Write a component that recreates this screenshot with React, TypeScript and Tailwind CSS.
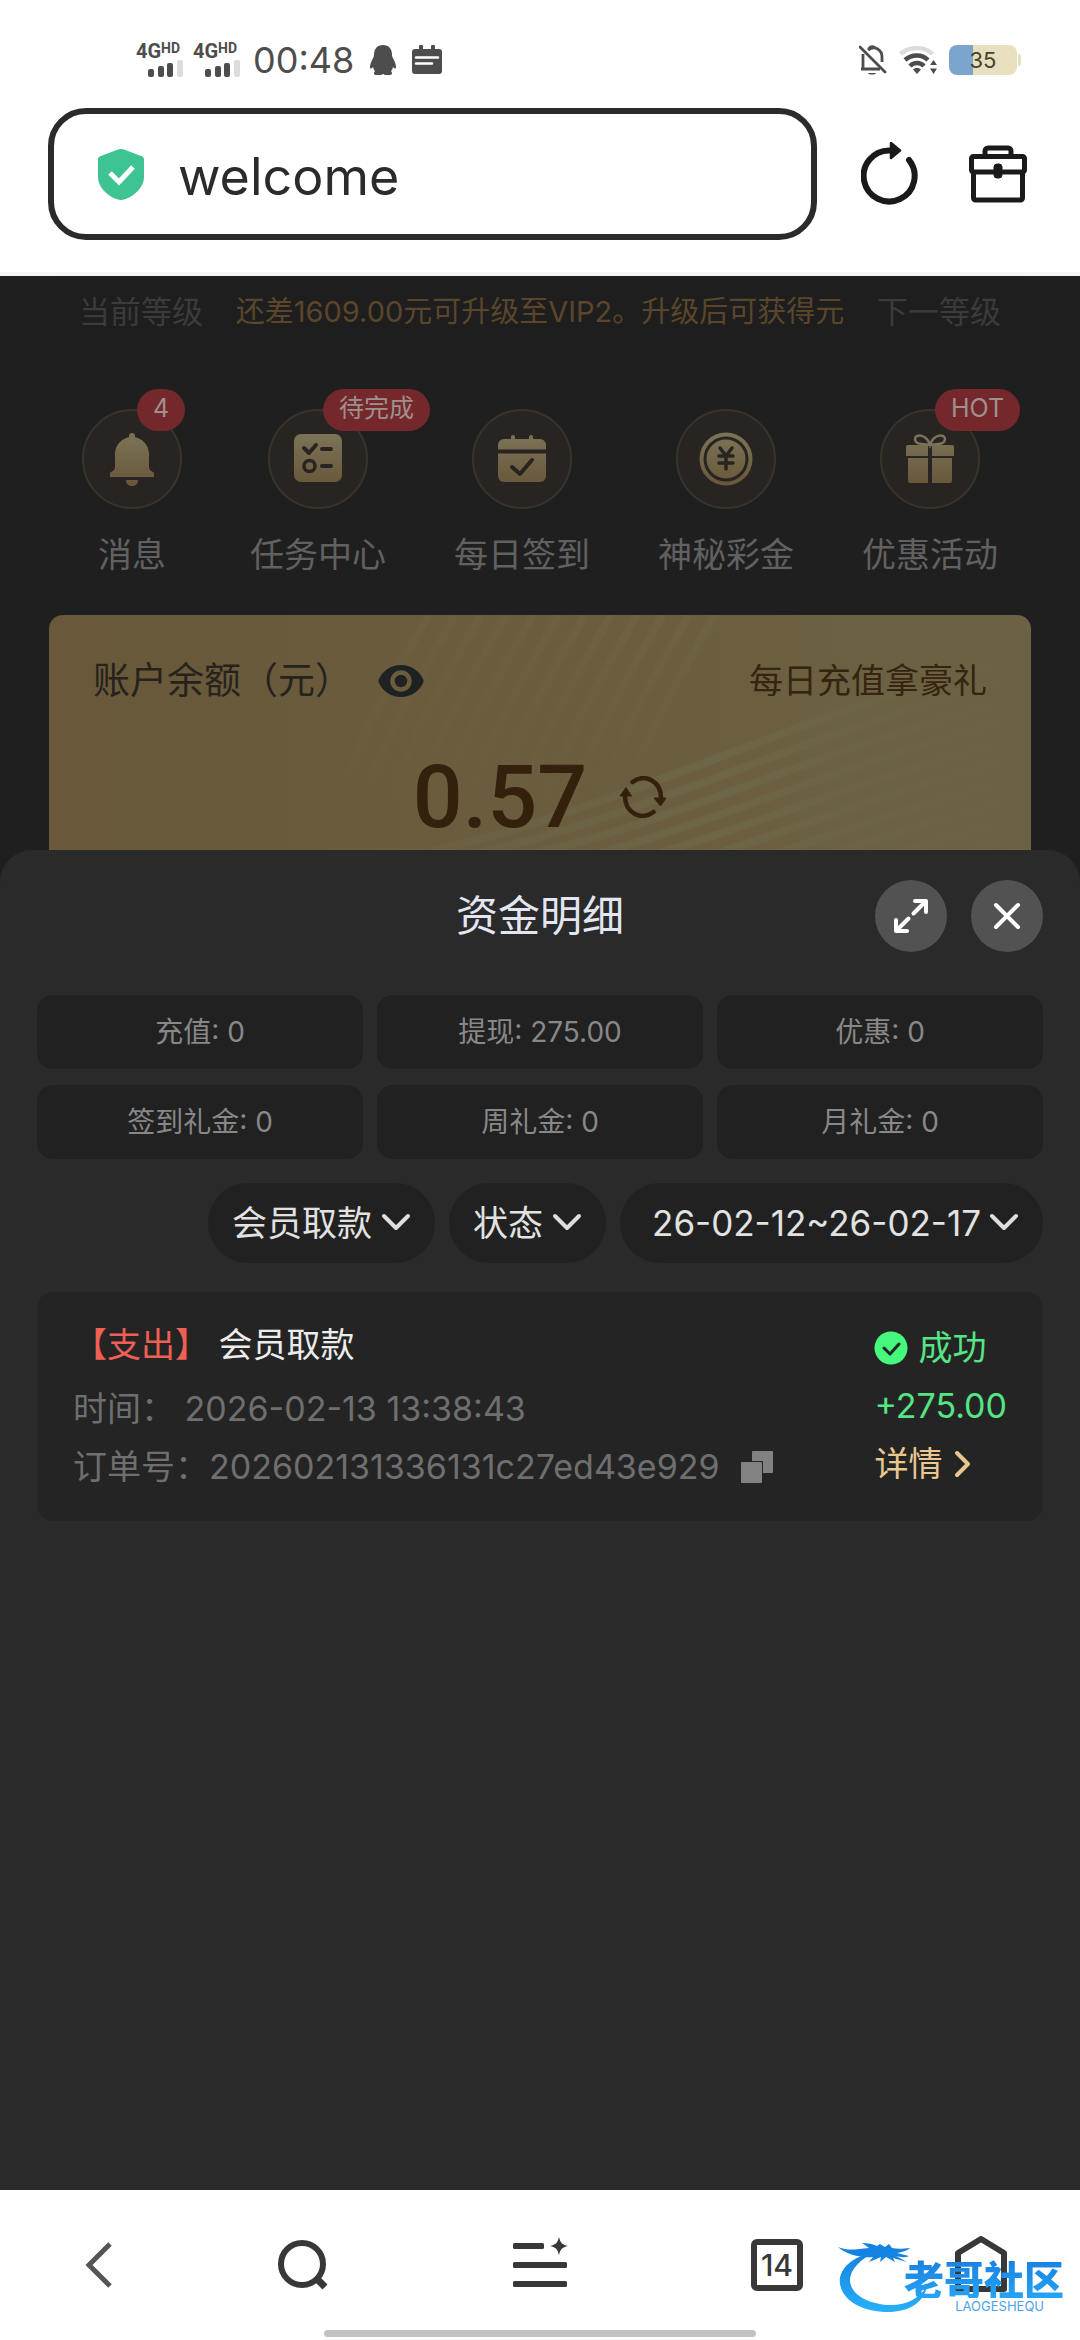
import { useState } from "react";
import type { ReactNode } from "react";

type Shortcut = {
  label: string;
  badge?: string;
  icon: ReactNode;
};

const GOLD = "url(#gold)";
const HOLE = "#272422";

const SHORTCUTS: Shortcut[] = [
  {
    label: "消息",
    badge: "4",
    icon: (
      <svg viewBox="0 0 56 56" className="size-14">
        <circle cx="28" cy="5" r="3" fill={GOLD} />
        <path
          d="M28 6c-10 0-17 8-17 17v13c0 3-2 4-4 5a2 2 0 0 0-1 2v3h44v-3a2 2 0 0 0-1-2c-2-1-4-2-4-5V23C45 14 38 6 28 6Z"
          fill={GOLD}
        />
        <path d="M22 49h12c0 4-3 6-6 6s-6-2-6-6Z" fill={GOLD} />
      </svg>
    ),
  },
  {
    label: "任务中心",
    badge: "待完成",
    icon: (
      <svg viewBox="0 0 56 56" className="size-14">
        <rect x="4" y="3" width="48" height="48" rx="7" fill={GOLD} />
        <g fill="none" stroke={HOLE} strokeWidth="4" strokeLinecap="round" strokeLinejoin="round">
          <path d="m14 17 5 5 7-8M32 18h9M32 35h9" />
          <circle cx="19.500" cy="35" r="5.500" strokeWidth="3.500" />
        </g>
      </svg>
    ),
  },
  {
    label: "每日签到",
    icon: (
      <svg viewBox="0 0 56 56" className="size-14">
        <path d="M17 6a2 2 0 0 1 4 0v5h-4zM35 6a2 2 0 0 1 4 0v5h-4z" fill={GOLD} />
        <rect x="4" y="8" width="48" height="43" rx="6" fill={GOLD} />
        <path d="M4 20.500h48" stroke={HOLE} strokeWidth="4" />
        <path
          d="m18 36 8 7 12-14"
          fill="none"
          stroke={HOLE}
          strokeWidth="4"
          strokeLinecap="round"
          strokeLinejoin="round"
        />
      </svg>
    ),
  },
  {
    label: "神秘彩金",
    icon: (
      <svg viewBox="0 0 56 56" className="size-14">
        <circle cx="28" cy="28" r="26.500" fill={GOLD} />
        <circle cx="28" cy="28" r="21" fill="none" stroke={HOLE} strokeWidth="3" />
        <path
          d="m22 17 6 8 6-8M28 25v13M21 25h14M21 32h14"
          fill="none"
          stroke={HOLE}
          strokeWidth="3.500"
          strokeLinecap="round"
          strokeLinejoin="round"
        />
      </svg>
    ),
  },
  {
    label: "优惠活动",
    badge: "HOT",
    icon: (
      <svg viewBox="0 0 56 56" className="size-14">
        <path
          d="M28 14C22 13 13 14 13 8c0-5 11-6 15 6 4-12 15-11 15-6 0 6-9 5-15 6Z"
          fill="none"
          stroke="#7c7458"
          strokeWidth="2.500"
        />
        <path d="M6 14h20v11H4V16a2 2 0 0 1 2-2ZM30 14h20a2 2 0 0 1 2 2v9H30z" fill={GOLD} />
        <path d="M6 27h20v25H8a2 2 0 0 1-2-2zM30 27h20v23a2 2 0 0 1-2 2H30z" fill={GOLD} />
      </svg>
    ),
  },
];

const STATS = [
  { label: "充值", value: "0" },
  { label: "提现", value: "275.00" },
  { label: "优惠", value: "0" },
  { label: "签到礼金", value: "0" },
  { label: "周礼金", value: "0" },
  { label: "月礼金", value: "0" },
];

function Signal() {
  return (
    <div className="flex h-9 w-12 flex-col">
      <div className="flex items-start font-[Roboto] font-bold leading-none">
        <span className="text-[20px] leading-[18px]">4G</span>
        <span className="text-[14px] leading-3">HD</span>
      </div>
      <svg viewBox="0 0 48 18" className="h-[18px] w-12">
        <g fill="#4d4d4d">
          <rect x="12" y="9" width="6" height="8" rx="2" />
          <rect x="22" y="6" width="6" height="11" rx="2" />
          <rect x="31" y="3" width="6" height="14" rx="2" />
        </g>
        <rect x="41" y="0" width="6" height="17" rx="2" fill="#dcdcdc" />
      </svg>
    </div>
  );
}

function StatusBar() {
  return (
    <div className="flex h-[108px] items-center justify-between pt-3 pr-[59px] pl-[136px] text-[#4d4d4d]">
      <div className="flex items-center">
        <div className="flex gap-[9px]">
          <Signal />
          <Signal />
        </div>
        <span className="ml-3 text-[36px] leading-9">00:48</span>
        <svg viewBox="0 0 26 30" className="ml-4 h-[30px] w-[26px]" fill="#4d4d4d">
          <path d="M13 0c6 0 9 4 9 10 0 3 4 7 4 12 0 2-1 2-3 0-.5 2-1 3-2 4 1 1 2 4-1 4h-5l-2-1-2 1H6c-3 0-2-3-1-4-1-1-1.500-2-2-4-2 2-3 2-3 0 0-5 4-9 4-12 0-6 3-10 9-10Z" />
        </svg>
        <svg viewBox="0 0 30 30" className="ml-4 size-[30px]">
          <path
            d="M3 4h4V1.500a1.500 1.500 0 0 1 4 0V4h8V1.500a1.500 1.500 0 0 1 4 0V4h4a3 3 0 0 1 3 3v19a3 3 0 0 1-3 3H3a3 3 0 0 1-3-3V7a3 3 0 0 1 3-3Z"
            fill="#4d4d4d"
          />
          <path d="M4 12.500h22M4 18.500h16" stroke="#fff" strokeWidth="2.500" strokeLinecap="round" />
        </svg>
      </div>
      <div className="flex items-center">
        <svg viewBox="0 0 28 30" className="h-[30px] w-7" fill="none" stroke="#4d4d4d" strokeWidth="2.800">
          <path d="M4 9v15h17M9 5c7-5 14 0 14 7v5M2 24h3" />
          <path d="M10 4c0-3 6-3 6 0" fill="#4d4d4d" />
          <path d="m1 2 25 25" strokeLinecap="round" />
          <path d="M9 28h8c-1 2-7 2-8 0Z" fill="#4d4d4d" stroke="none" />
        </svg>
        <svg viewBox="0 0 40 30" className="ml-3 h-[30px] w-10" fill="none">
          <path d="M1.500 9c9-8 24-8 32 0" stroke="#dcdcdc" strokeWidth="4.500" />
          <path d="M6 15c7-6 17-6 23 0M11 21c4-4 10-4 14 0" stroke="#4d4d4d" strokeWidth="4.500" />
          <path d="M14 24.500c2-2 6-2 8 0L18 29zM31 20l3.500-5 3.500 5zM31 23.500h7L34.500 29z" fill="#4d4d4d" />
        </svg>
        <div className="ml-[10px] flex h-[30px] w-[68px] items-center justify-center rounded-[8px] bg-linear-to-r from-[#7ba5cd] from-36% to-[#e8dfbe] to-36% text-[22px] leading-none text-[#45422f]">
          35
        </div>
        <div className="ml-px h-3 w-[3px] rounded-r-sm bg-[#e8dfbe]" />
      </div>
    </div>
  );
}

function AddressBar() {
  return (
    <div className="flex items-center border-b-4 border-[#f5f5f5] pr-[53px] pb-8 pl-12">
      <label className="flex h-[132px] min-w-0 flex-1 items-center gap-[34px] rounded-[38px] border-6 border-[#2b2b2b] pr-8 pl-11">
        <svg viewBox="0 0 46 52" className="h-[52px] w-[46px] shrink-0">
          <path
            d="M20 1.500a8 8 0 0 1 6 0L43 8a4 4 0 0 1 3 4v17c0 11-11 20-20 22.500a9 9 0 0 1-6 0C11 49 0 40 0 29V12a4 4 0 0 1 3-4Z"
            fill="#3dc492"
          />
          <path d="m12 25 9 9 14-15" fill="none" stroke="#fff" strokeWidth="5" />
        </svg>
        <input
          type="text"
          aria-label="网址"
          defaultValue="welcome"
          className="h-20 min-w-0 flex-1 bg-transparent pt-1 text-[52px] text-[#2b2b2b] outline-none"
        />
      </label>
      <button type="button" aria-label="刷新" className="ml-[44px]">
        <svg viewBox="0 0 58 64" className="h-16 w-[58px]" fill="none" stroke="#1a1a1a">
          <path d="M48 18A25.500 25.500 0 1 1 29 8.500" strokeWidth="6" strokeLinecap="round" />
          <path d="M30 1v15l9-7.500z" fill="#1a1a1a" strokeWidth="2.500" strokeLinejoin="round" />
        </svg>
      </button>
      <button type="button" aria-label="工具箱" className="ml-[50px]">
        <svg viewBox="0 0 58 58" className="size-[58px]" fill="none" stroke="#1a1a1a" strokeWidth="5">
          <rect x="2.500" y="11.500" width="53" height="15.500" rx="2" />
          <path d="M16 11V6a3 3 0 0 1 3-3h20a3 3 0 0 1 3 3v5M4.500 27v26a2 2 0 0 0 2 2h45a2 2 0 0 0 2-2V27" />
          <rect x="25" y="19" width="8" height="14" rx="3" fill="#1a1a1a" strokeWidth="1" />
        </svg>
      </button>
    </div>
  );
}

function BalanceCard() {
  const steep = Array.from({ length: 12 }, (_, i) => i * 26);
  const shallow = Array.from({ length: 11 }, (_, i) => i * 20);

  return (
    <section className="relative mx-[49px] overflow-hidden rounded-t-[14px] bg-linear-to-r from-[#69583a] to-[#6c6243] px-11 pt-11 pb-[5px]">
      <svg viewBox="0 0 982 235" preserveAspectRatio="none" className="absolute inset-0 size-full" fill="none">
        <defs>
          <linearGradient id="steep" gradientUnits="userSpaceOnUse" x1="0" y1="0" x2="0" y2="200">
            <stop offset="0" stopColor="#7a7652" stopOpacity="0.140" />
            <stop offset="1" stopColor="#7a7652" stopOpacity="0" />
          </linearGradient>
          <linearGradient id="shallow" gradientUnits="userSpaceOnUse" x1="380" y1="0" x2="960" y2="0">
            <stop offset="0" stopColor="#6f7556" stopOpacity="0.150" />
            <stop offset="0.500" stopColor="#6f7556" stopOpacity="0.280" />
            <stop offset="1" stopColor="#6f7556" stopOpacity="0" />
          </linearGradient>
        </defs>
        <g stroke="url(#steep)" strokeWidth="8">
          {steep.map((x) => (
            <path key={x} d={`M${380 + x} 0C${340 + x} 70 ${310 + x} 120 ${280 + x} 210`} />
          ))}
        </g>
        <g stroke="url(#shallow)" strokeWidth="8">
          {shallow.map((y) => (
            <path key={y} d={`M${370 + y} ${240 + y / 3}C600 ${185 + y} 740 ${100 + y} 982 ${40 + y}`} />
          ))}
        </g>
      </svg>
      <div className="relative flex h-11 items-center justify-between">
        <div className="flex items-center text-[37px] text-[#26231c]">
          账户余额（元）
          <button type="button" aria-label="隐藏余额" className="ml-[26px]">
            <svg viewBox="0 0 46 34" className="h-[34px] w-[46px]">
              <path d="M23 1C12 1 4 8 1 15a4 4 0 0 0 0 4c3 7 11 14 22 14s19-7 22-14a4 4 0 0 0 0-4C42 8 34 1 23 1Z" fill="#1f2223" />
              <circle cx="23" cy="17" r="8.500" fill="none" stroke="#6b5c3d" strokeWidth="4.500" />
            </svg>
          </button>
        </div>
        <a href="#recharge" className="text-[34px] leading-10 text-[#35240f]">
          每日充值拿豪礼
        </a>
      </div>
      <div className="relative mt-[46px] flex h-24 items-center justify-center gap-8 text-[#33210e]">
        <span className="font-[Roboto] text-[88px] leading-24 font-medium">0.57</span>
        <button type="button" aria-label="刷新余额">
          <svg viewBox="0 0 48 42" className="h-[42px] w-12" fill="none" stroke="#33210e" strokeWidth="4.500">
            <path d="M13.500 6C26-3 42 5 42 22M34.500 36C22 45 6 37 6 20" strokeLinecap="round" />
            <path d="m35 22 6.500 8L47 22zM1 20l6-8.500 5.500 8.500z" fill="#33210e" strokeWidth="1" />
          </svg>
        </button>
      </div>
    </section>
  );
}

function AccountPage() {
  return (
    <>
      <div className="mx-[49px] rounded-b-lg bg-[#1e1e1e] px-[30px] pb-7">
        <div className="flex h-[72px] items-center justify-between whitespace-nowrap">
          <span className="text-[31px] text-[#3b3b3b]">当前等级</span>
          <span className="text-[29px] text-[#5b462b]">还差1609.00元可升级至VIP2。升级后可获得元</span>
          <span className="text-[31px] text-[#3b3b3b]">下一等级</span>
        </div>
      </div>
      <nav className="mt-[33px] mb-10 flex justify-between px-[82px]">
        {SHORTCUTS.map((item) => (
          <button key={item.label} type="button" className="flex flex-col items-center gap-[26px]">
            <span className="relative flex size-[100px] items-center justify-center rounded-full border-2 border-[#38342a] bg-[#272422]">
              {item.icon}
              {item.badge && (
                <span className="absolute -top-[22px] left-[53px] flex h-[42px] items-center rounded-full bg-[#74282b] px-4 pb-0.5 text-[25px] whitespace-nowrap text-[#a0908d]">
                  {item.badge}
                </span>
              )}
            </span>
            <span className="text-[34px] leading-10 text-[#616161]">{item.label}</span>
          </button>
        ))}
      </nav>
      <BalanceCard />
    </>
  );
}

function Chevron() {
  return (
    <svg viewBox="0 0 30 20" className="h-5 w-[30px]" fill="none" stroke="#dedede" strokeWidth="4">
      <path d="m3 3 12 12L27 3" strokeLinecap="round" strokeLinejoin="round" />
    </svg>
  );
}

function FundDetails() {
  const [type, setType] = useState("会员取款");
  const [status, setStatus] = useState("状态");

  return (
    <main className="flex-1 rounded-t-[32px] bg-[#2a2a2a] px-[37px] pt-[30px]">
      <header className="grid grid-cols-[1fr_auto_1fr] items-center">
        <h1 className="col-start-2 text-[42px] leading-[60px] text-[#e2e6f2]">资金明细</h1>
        <div className="flex justify-end gap-6">
          <button
            type="button"
            aria-label="展开"
            className="flex size-[72px] items-center justify-center rounded-full bg-[#525252]"
          >
            <svg viewBox="0 0 36 36" className="size-9" fill="none" stroke="#fff" strokeWidth="4" strokeLinejoin="round">
              <path d="M22 3h11v11M32 4 20.500 15.500M14 33H3V22M4 32l11.500-11.500" strokeLinecap="round" />
            </svg>
          </button>
          <button
            type="button"
            aria-label="关闭"
            className="flex size-[72px] items-center justify-center rounded-full bg-[#525252]"
          >
            <svg viewBox="0 0 28 28" className="size-7" fill="none" stroke="#fff" strokeWidth="4">
              <path d="m3 3 22 22M25 3 3 25" strokeLinecap="round" />
            </svg>
          </button>
        </div>
      </header>

      <div className="mt-[43px] grid grid-cols-3 gap-x-[14px] gap-y-4">
        {STATS.map((s) => (
          <div
            key={s.label}
            className="flex h-[74px] items-center justify-center rounded-2xl bg-[#212121] text-[28px] text-[#888888]"
          >
            {s.label}: {s.value}
          </div>
        ))}
      </div>

      <div className="mt-6 flex justify-end gap-[14px] text-[35px] text-[#e2e2e2]">
        <label className="flex h-20 items-center gap-2 rounded-full bg-[#212121] px-6">
          <select
            aria-label="类型"
            value={type}
            onChange={(e) => setType(e.target.value)}
            className="appearance-none bg-transparent outline-none"
          >
            <option>会员取款</option>
          </select>
          <Chevron />
        </label>
        <label className="flex h-20 items-center gap-2 rounded-full bg-[#212121] px-6">
          <select
            aria-label="状态"
            value={status}
            onChange={(e) => setStatus(e.target.value)}
            className="appearance-none bg-transparent outline-none"
          >
            <option>状态</option>
          </select>
          <Chevron />
        </label>
        <button type="button" className="flex h-20 items-center gap-2 rounded-full bg-[#212121] pr-6 pl-8">
          26-02-12~26-02-17
          <Chevron />
        </button>
      </div>

      <article className="mt-[29px] flex items-center justify-between rounded-2xl bg-[#242424] px-9 pt-6 pb-[25px] text-[34px] leading-[58px]">
        <div className="text-[#6f6f6f]">
          <h2 className="mb-[6px] text-[#ececec]">
            <span className="text-[#ee5f55]">【支出】</span> 会员取款
          </h2>
          <p>时间： 2026-02-13 13:38:43</p>
          <p className="flex items-center">
            订单号：202602131336131c27ed43e929
            <button type="button" aria-label="复制" className="ml-5">
              <svg viewBox="0 0 34 34" className="size-[34px]" fill="#828282">
                <rect x="12" y="1" width="21" height="22" rx="1" />
                <rect x="0" y="11" width="23" height="23" rx="1" fill="#242424" />
                <rect x="1" y="12" width="21" height="21" rx="1" />
              </svg>
            </button>
          </p>
        </div>
        <div className="text-[#55e585]">
          <p className="flex items-center gap-[10px]">
            <svg viewBox="0 0 34 34" className="size-[34px]">
              <circle cx="17" cy="17" r="16.500" fill="#46f87c" />
              <path
                d="m10 17 6 6 9-10"
                fill="none"
                stroke="#242424"
                strokeWidth="3"
                strokeLinecap="round"
                strokeLinejoin="round"
              />
            </svg>
            成功
          </p>
          <p>+275.00</p>
          <a href="#detail" className="flex items-center gap-3 text-[#e9c88f]">
            详情
            <svg viewBox="0 0 18 28" className="h-7 w-[18px]" fill="none" stroke="#e9c88f" strokeWidth="4">
              <path d="m3 3 11 11L3 25" strokeLinecap="round" strokeLinejoin="round" />
            </svg>
          </a>
        </div>
      </article>
    </main>
  );
}

function Watermark() {
  return (
    <div className="pointer-events-none absolute right-4 bottom-[22px] h-[80px] w-[228px]">
      <svg viewBox="0 0 228 80" className="absolute inset-0 size-full">
        <defs>
          <linearGradient id="wave" x1="0" y1="0" x2="0" y2="1">
            <stop offset="0" stopColor="#1480e0" />
            <stop offset="1" stopColor="#28b0fa" />
          </linearGradient>
        </defs>
        <path
          d="M40 14C14 18 2 33 4 46c3 18 24 28 48 28 20 0 36-9 39-26-7 12-20 19-36 19C33 67 13 56 14 41c1-10 10-20 26-27Z"
          fill="url(#wave)"
        />
        <path
          d="M2 9c8 3 14 3 21 2l10-1-7-5c6 0 11 1 15 3l3-2 5 3 4-3 3 4c5 1 10 1 18 0-3 3-8 4-13 5l12 3c-4 2-9 1-13 0l11 6-14-4 2 4-9-5-6 5 1-5-12 5 4-5c-12 1-26-2-35-10Z"
          fill="#1583e2"
        />
      </svg>
      <div className="relative flex flex-col items-end pt-5">
        <span className="bg-linear-to-b from-[#1a7fe0] to-[#25a4f5] bg-clip-text font-['Noto_Sans_CJK_SC',sans-serif] text-[40px] leading-10 font-black text-transparent">
          老哥社区
        </span>
        <span className="mr-5 text-[13px] leading-4 text-[#4aa4ea]">LAOGESHEQU</span>
      </div>
    </div>
  );
}

function BottomBar() {
  return (
    <footer className="relative bg-white">
      <nav className="grid h-[140px] grid-cols-[198fr_210fr_264fr_210fr_198fr] items-center justify-items-center pt-[10px]">
        <button type="button" aria-label="后退">
          <svg viewBox="0 0 28 48" className="h-12 w-7" fill="none" stroke="#555" strokeWidth="5">
            <path d="M25 3 4 24l21 21" />
          </svg>
        </button>
        <button type="button" aria-label="搜索">
          <svg viewBox="0 0 52 52" className="size-13" fill="none" stroke="#383838" strokeWidth="6">
            <circle cx="25" cy="25" r="21" />
            <path d="m39 39 9 9" strokeWidth="7" />
          </svg>
        </button>
        <button type="button" aria-label="菜单">
          <svg viewBox="0 0 56 56" className="size-14">
            <g fill="#383838">
              <rect x="1" y="6" width="31" height="6" rx="1.500" />
              <rect x="1" y="25" width="54" height="6" rx="1.500" />
              <rect x="1" y="44" width="54" height="6" rx="1.500" />
              <path d="M47 0c1.500 6 3 7.500 9 9-6 1.500-7.500 3-9 9-1.500-6-3-7.500-9-9 6-1.500 7.500-3 9-9Z" />
            </g>
          </svg>
        </button>
        <button
          type="button"
          aria-label="14 个标签页"
          className="flex size-13 items-center justify-center rounded-[6px] border-6 border-[#383838] text-[30px] leading-none font-medium text-[#383838]"
        >
          14
        </button>
        <button type="button" aria-label="主页">
          <svg viewBox="0 0 54 58" className="h-[58px] w-[54px]" fill="none" stroke="#383838" strokeWidth="6">
            <path d="M4 53V17L27 3l23 14v36z" strokeLinejoin="round" />
          </svg>
        </button>
      </nav>
      <div className="flex h-[10px] justify-center">
        <div className="h-[7px] w-2/5 rounded-full bg-[#c1c1c1]" />
      </div>
      <Watermark />
    </footer>
  );
}

export default function App() {
  return (
    <div className="flex min-h-screen flex-col bg-[#1f1f1f] font-[Inter,'Noto_Sans_CJK_SC',sans-serif]">
      <svg className="absolute size-0" aria-hidden="true">
        <defs>
          <linearGradient id="gold" gradientUnits="userSpaceOnUse" x1="0" y1="2" x2="0" y2="54">
            <stop offset="0" stopColor="#7c7458" />
            <stop offset="1" stopColor="#69573a" />
          </linearGradient>
        </defs>
      </svg>
      <div className="bg-white">
        <StatusBar />
        <AddressBar />
      </div>
      <AccountPage />
      <FundDetails />
      <BottomBar />
    </div>
  );
}
